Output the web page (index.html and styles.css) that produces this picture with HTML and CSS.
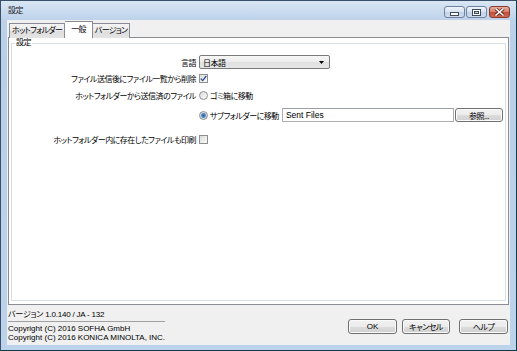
FILE: index.html
```html
<!DOCTYPE html>
<html lang="ja">
<head>
<meta charset="utf-8">
<title>設定</title>
<link rel="stylesheet" href="styles.css">
</head>
<body>
<div class="window">
  <div class="titlebar">
    <span class="title">設定</span>
    <div class="caption-btns">
      <span class="cbtn"><svg width="9" height="4" viewBox="0 0 9 4"><rect x="0.5" y="0.5" width="8" height="3" fill="#fff" stroke="#3c4a5e"/></svg></span>
      <span class="cbtn"><svg width="9" height="7" viewBox="0 0 9 7"><rect x="0.5" y="0.5" width="8" height="6" fill="#fff" stroke="#3c4a5e"/><rect x="2.5" y="2.5" width="4" height="2" fill="#c9d8ea" stroke="#3c4a5e"/></svg></span>
      <span class="cbtn close"><svg width="11" height="8" viewBox="0 0 11 8"><path d="M1.5 0.5 L9.5 7.5 M9.5 0.5 L1.5 7.5" stroke="#5a1a10" stroke-width="3"/><path d="M1.5 0.5 L9.5 7.5 M9.5 0.5 L1.5 7.5" stroke="#fff" stroke-width="1.6"/></svg></span>
    </div>
  </div>
  <div class="client">
    <div class="tabs">
      <span class="tab">ホットフォルダー</span>
      <span class="tab active">一般</span>
      <span class="tab">バージョン</span>
    </div>
    <div class="panel">
      <fieldset class="group">
        <legend>設定</legend>
        <div class="row">
          <span class="lbl">言語</span>
          <div class="ctl"><span class="select">日本語<svg width="5" height="3" viewBox="0 0 5 3"><path d="M0 0 H5 L2.5 3 Z" fill="#000"/></svg></span></div>
        </div>
        <div class="row r2">
          <span class="lbl">ファイル送信後にファイル一覧から削除</span>
          <div class="ctl"><span class="check"><svg width="7" height="7" viewBox="0 0 7 7"><path d="M0.8 3.6 L2.7 5.6 L6.3 1" fill="none" stroke="#2a4b8f" stroke-width="1.3"/></svg></span></div>
        </div>
        <div class="row r3">
          <span class="lbl">ホットフォルダーから送信済のファイル</span>
          <div class="ctl"><span class="radio"></span><span class="opt">ゴミ箱に移動</span></div>
        </div>
        <div class="row r4">
          <span class="lbl"></span>
          <div class="ctl"><span class="radio on"></span><span class="opt">サブフォルダーに移動</span><span class="textbox">Sent Files</span><span class="btn browse">参照...</span></div>
        </div>
        <div class="row r5">
          <span class="lbl">ホットフォルダー内に存在したファイルも印刷</span>
          <div class="ctl"><span class="check"></span></div>
        </div>
      </fieldset>
    </div>
    <div class="footer">
      <div class="info">
        <div class="version">バージョン 1.0.140 / JA - 132</div>
        <div class="copy first">Copyright (C) 2016 SOFHA GmbH</div>
        <div class="copy">Copyright (C) 2016 KONICA MINOLTA, INC.</div>
      </div>
      <div class="buttons">
        <span class="btn ok">OK</span>
        <span class="btn cancel">キャンセル</span>
        <span class="btn help">ヘルプ</span>
      </div>
    </div>
  </div>
</div>
</body>
</html>
```

FILE: styles.css
```css
html, body {
  margin: 0;
  padding: 0;
}
body {
  width: 517px;
  height: 351px;
  overflow: hidden;
  font-family: "Liberation Sans", "Noto Sans CJK JP", sans-serif;
  font-size: 8px;
  font-feature-settings: "palt";
  letter-spacing: -0.5px;
  color: #000;
  background: #fff;
}
.window {
  box-sizing: border-box;
  width: 517px;
  height: 351px;
  border: 1px solid #3a5068;
  border-right-color: #0d3b48;
  border-bottom-color: #0d3b48;
  background: linear-gradient(#d9e6f4, #bdd2ea 19px, #b8cfe8 60px, #bcd3eb);
  padding: 0 6px 5px 6px;
  display: flex;
  flex-direction: column;
}
.titlebar {
  height: 19px;
  display: flex;
  align-items: flex-start;
  justify-content: space-between;
}
.title {
  padding-left: 1px;
  line-height: 10px;
  margin-top: 5px;
  color: #222;
}
.caption-btns {
  display: flex;
  gap: 1px;
  margin-top: 5px;
}
.cbtn {
  box-sizing: border-box;
  width: 21px;
  height: 12px;
  border: 1px solid #6f83a0;
  border-radius: 3px;
  background: linear-gradient(#eef3f9, #d6e2f0 50%, #c3d4e9 51%, #cddcee);
  display: flex;
  align-items: center;
  justify-content: center;
}
.cbtn:nth-child(1) svg { margin-top: 3px; }
.cbtn.close {
  margin-left: 1px;
  border-color: #8c3a2b;
  background: linear-gradient(#e6ad9f, #d47f6a 50%, #c24d35 51%, #d06a52);
}
.client {
  flex: 1;
  background: #f0f0f0;
  display: flex;
  flex-direction: column;
  padding: 1px 1px 0 1px;
}
.tabs {
  display: flex;
  align-items: flex-end;
  height: 17px;
  padding-left: 1px;
  margin-bottom: -1px;
  position: relative;
  z-index: 1;
}
.tab {
  box-sizing: border-box;
  height: 15px;
  border: 1px solid #898c95;
  border-bottom: none;
  border-left: none;
  background: linear-gradient(#f3f3f3, #ebebeb 50%, #dedede 51%, #e4e4e4);
  padding: 0 2px;
  line-height: 13px;
  letter-spacing: -0.7px;
  white-space: nowrap;
}
.tab:first-child { border-left: 1px solid #898c95; }
.tab.active {
  height: 17px;
  background: #fff;
  padding: 1px 6px 0;
  border-left: none;
}
.panel {
  flex: 1;
  background: #fff;
  border: 1px solid #898c95;
  padding: 0 2px 3px 2px;
  display: flex;
}
.group {
  flex: 1;
  margin: 0;
  padding: 0;
  border: 1px solid #d5dfe5;
  min-width: 0;
}
.group legend {
  margin-left: 3px;
  padding: 0 1px;
  line-height: 10px;
}
.row {
  display: grid;
  grid-template-columns: 184px 1fr;
  column-gap: 3px;
  align-items: center;
  height: 14px;
}
.row:first-of-type { margin-top: 7px; }
.r2 { margin-top: 2px; }
.r3 { margin-top: 3px; }
.r4 { margin-top: 6px; }
.r5 { margin-top: 10px; }
.lbl {
  text-align: right;
  white-space: nowrap;
}
.ctl {
  display: flex;
  align-items: center;
  height: 14px;
  padding-right: 2px;
}
.select {
  box-sizing: border-box;
  width: 131px;
  height: 14px;
  border: 1px solid #7a7a7a;
  border-radius: 2px;
  background: linear-gradient(#f7f7f7, #ececec 50%, #e0e0e0 51%, #e6e6e6);
  display: flex;
  align-items: center;
  justify-content: space-between;
  padding: 0 5px 0 3px;
}
.check {
  box-sizing: border-box;
  width: 9px;
  height: 9px;
  border: 1px solid #8e8f8f;
  background: linear-gradient(135deg, #dcdcdc, #fbfbfb);
  display: flex;
  align-items: center;
  justify-content: center;
}
.radio {
  box-sizing: border-box;
  width: 9px;
  height: 9px;
  border: 1px solid #8e8f8f;
  border-radius: 50%;
  background: linear-gradient(135deg, #dcdcdc, #fbfbfb);
}
.radio.on {
  background: radial-gradient(circle, #2e5c92 0, #5a8fc6 2px, #c8d8ea 3px, #f0f0f0 4px);
}
.opt {
  margin-left: 2px;
  white-space: nowrap;
}
.textbox {
  box-sizing: border-box;
  flex: 1;
  height: 14px;
  margin-left: 3px;
  border: 1px solid #abadb3;
  border-top-color: #9a9ea6;
  padding: 0 3px;
  line-height: 12px;
  letter-spacing: 0;
  font-size: 8.5px;
  background: #fff;
}
.btn {
  box-sizing: border-box;
  height: 15px;
  border: 1px solid #707070;
  border-radius: 3px;
  background: linear-gradient(#f2f2f2, #ebebeb 50%, #dddddd 51%, #cfcfcf);
  box-shadow: inset 0 0 0 1px #fbfbfb;
  display: flex;
  align-items: center;
  justify-content: center;
  white-space: nowrap;
}
.btn.browse {
  width: 48px;
  height: 14px;
  margin-left: 1px;
}
.footer {
  height: 40px;
  display: flex;
  justify-content: space-between;
}
.info {
  width: 157px;
}
.version {
  margin-top: 5px;
  line-height: 10px;
  padding-bottom: 1px;
  border-bottom: 1px solid #a0a0a0;
  white-space: nowrap;
  letter-spacing: -0.2px;
}
.copy {
  line-height: 9px;
  white-space: nowrap;
  letter-spacing: 0;
}
.copy.first { margin-top: 2px; }
.buttons {
  display: flex;
  align-items: flex-start;
  padding-top: 14px;
  padding-right: 1px;
}
.btn.ok { width: 49px; letter-spacing: 0; }
.btn.cancel { width: 48px; margin-left: 5px; }
.btn.help { width: 49px; margin-left: 9px; }
```
